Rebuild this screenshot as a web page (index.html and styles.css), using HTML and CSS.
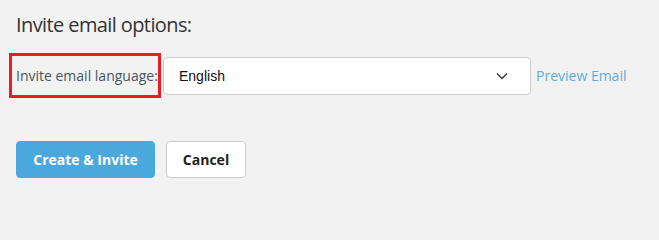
FILE: index.html
```html
<!DOCTYPE html>
<html>
<head>
<meta charset="utf-8">
<link rel="stylesheet" href="styles.css">
</head>
<body>
<div class="page">
  <h2 class="title">Invite email options:</h2>
  <div class="row">
    <label class="label">Invite email language:</label>
    <div class="select">
      <span class="select-value">English</span>
      <svg class="chevron" width="12" height="8" viewBox="0 0 12 8"><path d="M1 1.5 L6 6.5 L11 1.5" fill="none" stroke="#333" stroke-width="1.3"/></svg>
    </div>
    <a class="preview">Preview Email</a>
  </div>
  <div class="actions">
    <button class="btn btn-primary">Create &amp; Invite</button>
    <button class="btn btn-default">Cancel</button>
  </div>
</div>
</body>
</html>
```
FILE: styles.css
```css
html, body {
  margin: 0;
  padding: 0;
  background: #f2f2f2;
}
body {
  font-family: "Open Sans", sans-serif;
  width: 659px;
  height: 210px;
  overflow: hidden;
}
.page {
  padding: 11px 16px 0 16px;
}
.title {
  margin: 0;
  font-size: 20px;
  font-weight: 400;
  letter-spacing: -0.6px;
  line-height: 27px;
  color: #333;
}
.row {
  display: flex;
  align-items: center;
  margin-top: 15px;
  margin-left: -7px;
}
.label {
  box-sizing: border-box;
  width: 152px;
  height: 45px;
  border: 3px solid #ec1c24;
  padding-left: 4px;
  display: flex;
  align-items: center;
  font-size: 14px;
  color: #4a5563;
  white-space: nowrap;
}
.select {
  box-sizing: border-box;
  margin-left: 2px;
  width: 368px;
  height: 38px;
  background: #fff;
  border: 1px solid #ccc;
  border-radius: 4px;
  display: flex;
  align-items: center;
  justify-content: space-between;
  padding: 0 22px 0 15px;
}
.select-value {
  font-family: "Liberation Sans", Arial, sans-serif;
  font-size: 14px;
  color: #111;
}
.chevron {
  display: block;
}
.preview {
  margin-left: 5px;
  font-size: 14px;
  color: #5aade0;
  cursor: pointer;
}
.actions {
  display: flex;
  gap: 11px;
  margin-top: 43px;
}
.btn {
  box-sizing: border-box;
  height: 37px;
  font-family: "Open Sans", sans-serif;
  font-size: 14px;
  font-weight: 700;
  border-radius: 4px;
  padding: 0;
  cursor: pointer;
}
.btn-primary {
  width: 139px;
  background: #4aa8dc;
  border: 1px solid #4aa8dc;
  color: #fff;
}
.btn-default {
  width: 80px;
  background: #fff;
  border: 1px solid #ccc;
  color: #222;
}
```
